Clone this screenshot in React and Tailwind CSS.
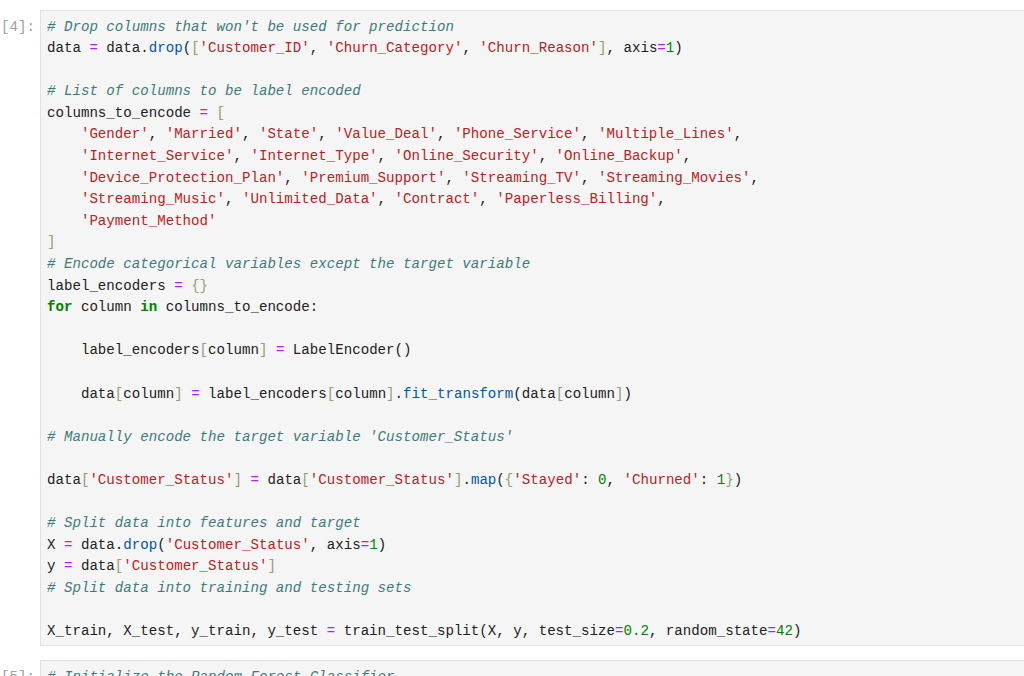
import React from "react";

// token colour classes, written out in full so tailwind picks them up
const STYLE = {
  t: "text-[#212121]",
  c: "italic text-[#3d7b7b]",
  s: "text-[#ba2121]",
  k: "font-bold text-[#008000]",
  o: "text-[#aa22ff]",
  n: "text-[#008000]",
  f: "text-[#0055aa]",
  b: "text-[#999977]",
};

const lines = [
  [["c", "# Drop columns that won't be used for prediction"]],
  [["t", "data "], ["o", "="], ["t", " data."], ["f", "drop"], ["t", "("], ["b", "["], ["s", "'Customer_ID'"], ["t", ", "], ["s", "'Churn_Category'"], ["t", ", "], ["s", "'Churn_Reason'"], ["b", "]"], ["t", ", axis"], ["o", "="], ["n", "1"], ["t", ")"]],
  [],
  [["c", "# List of columns to be label encoded"]],
  [["t", "columns_to_encode "], ["o", "="], ["t", " "], ["b", "["]],
  [["t", "    "], ["s", "'Gender'"], ["t", ", "], ["s", "'Married'"], ["t", ", "], ["s", "'State'"], ["t", ", "], ["s", "'Value_Deal'"], ["t", ", "], ["s", "'Phone_Service'"], ["t", ", "], ["s", "'Multiple_Lines'"], ["t", ","]],
  [["t", "    "], ["s", "'Internet_Service'"], ["t", ", "], ["s", "'Internet_Type'"], ["t", ", "], ["s", "'Online_Security'"], ["t", ", "], ["s", "'Online_Backup'"], ["t", ","]],
  [["t", "    "], ["s", "'Device_Protection_Plan'"], ["t", ", "], ["s", "'Premium_Support'"], ["t", ", "], ["s", "'Streaming_TV'"], ["t", ", "], ["s", "'Streaming_Movies'"], ["t", ","]],
  [["t", "    "], ["s", "'Streaming_Music'"], ["t", ", "], ["s", "'Unlimited_Data'"], ["t", ", "], ["s", "'Contract'"], ["t", ", "], ["s", "'Paperless_Billing'"], ["t", ","]],
  [["t", "    "], ["s", "'Payment_Method'"]],
  [["b", "]"]],
  [["c", "# Encode categorical variables except the target variable"]],
  [["t", "label_encoders "], ["o", "="], ["t", " "], ["b", "{}"]],
  [["k", "for"], ["t", " column "], ["k", "in"], ["t", " columns_to_encode:"]],
  [],
  [["t", "    label_encoders"], ["b", "["], ["t", "column"], ["b", "]"], ["t", " "], ["o", "="], ["t", " LabelEncoder()"]],
  [],
  [["t", "    data"], ["b", "["], ["t", "column"], ["b", "]"], ["t", " "], ["o", "="], ["t", " label_encoders"], ["b", "["], ["t", "column"], ["b", "]"], ["t", "."], ["f", "fit_transform"], ["t", "(data"], ["b", "["], ["t", "column"], ["b", "]"], ["t", ")"]],
  [],
  [["c", "# Manually encode the target variable 'Customer_Status'"]],
  [],
  [["t", "data"], ["b", "["], ["s", "'Customer_Status'"], ["b", "]"], ["t", " "], ["o", "="], ["t", " data"], ["b", "["], ["s", "'Customer_Status'"], ["b", "]"], ["t", "."], ["f", "map"], ["t", "("], ["b", "{"], ["s", "'Stayed'"], ["t", ": "], ["n", "0"], ["t", ", "], ["s", "'Churned'"], ["t", ": "], ["n", "1"], ["b", "}"], ["t", ")"]],
  [],
  [["c", "# Split data into features and target"]],
  [["t", "X "], ["o", "="], ["t", " data."], ["f", "drop"], ["t", "("], ["s", "'Customer_Status'"], ["t", ", axis"], ["o", "="], ["n", "1"], ["t", ")"]],
  [["t", "y "], ["o", "="], ["t", " data"], ["b", "["], ["s", "'Customer_Status'"], ["b", "]"]],
  [["c", "# Split data into training and testing sets"]],
  [],
  [["t", "X_train, X_test, y_train, y_test "], ["o", "="], ["t", " train_test_split(X, y, test_size"], ["o", "="], ["n", "0.2"], ["t", ", random_state"], ["o", "="], ["n", "42"], ["t", ")"]],
];

const mono = "font-['Liberation_Mono','DejaVu_Sans_Mono',monospace] text-[14.13px] leading-[21.6px]";

function Cell({ n, code }) {
  return (
    <div className="flex">
      <div className={`w-[40px] shrink-0 pt-[6.5px] pr-[5px] text-right text-[#a0a0a0] ${mono}`}>
        [{n}]:
      </div>
      <div className="w-[1000px] shrink-0 bg-[#f5f5f5] border border-[#e0e0e0] pt-[5.5px] pb-[2.5px] pl-[6px]">
        <pre className={`${mono} whitespace-pre text-[#212121]`}>
          {code.map((line, i) => (
            <div key={i} className="h-[21.6px]">
              {line.map(([type, text], j) => (
                <span key={j} className={STYLE[type]}>
                  {text}
                </span>
              ))}
            </div>
          ))}
        </pre>
      </div>
    </div>
  );
}

export default function App() {
  return (
    <div className="w-[1024px] h-[676px] overflow-hidden bg-white pt-[10px] flex flex-col gap-[14px]">
      <Cell n={4} code={lines} />
      <Cell n={5} code={[[["c", "# Initialize the Random Forest Classifier"]], [["t", "rf_model "], ["o", "="], ["t", " RandomForestClassifier(n_estimators"], ["o", "="], ["n", "100"], ["t", ", random_state"], ["o", "="], ["n", "42"], ["t", ")"]]]} />
    </div>
  );
}
